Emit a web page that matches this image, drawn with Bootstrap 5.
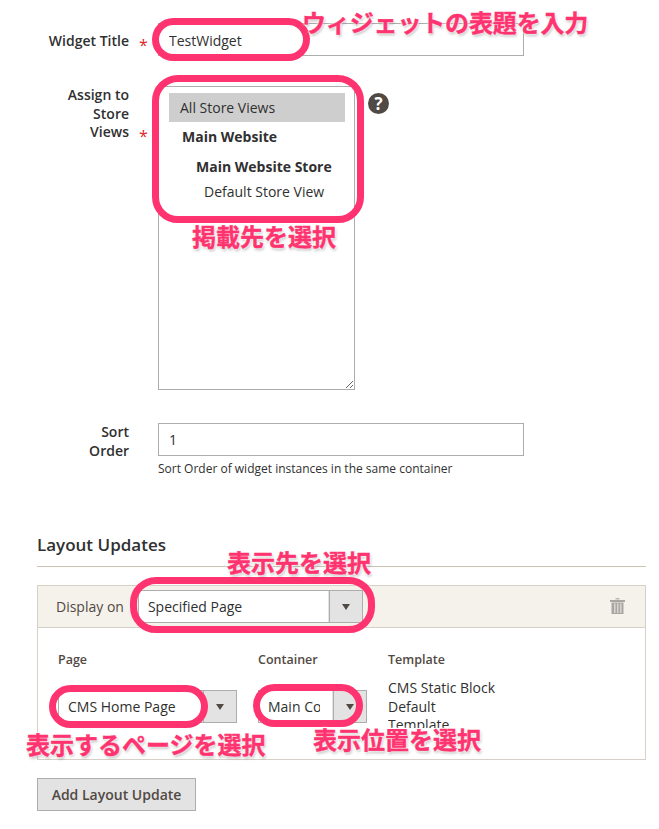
<!DOCTYPE html>
<html lang="en">
<head>
<meta charset="utf-8">
<title>Widget</title>
<link rel="stylesheet" href="https://cdn.jsdelivr.net/npm/bootstrap@5.3.0/dist/css/bootstrap.min.css">
<style>
body{font-family:"Open Sans",sans-serif;font-size:14px;color:#303030;background:#fff;position:relative;height:829px;overflow:hidden}
.sheet{padding:23px 13px 0 37px}
.frow{display:flex;align-items:flex-start}
.flabel{width:92px;flex:none;text-align:right;font-weight:600;line-height:18.6px;margin:0;color:#303030;position:relative;padding-left:30px}
.flabel-one{padding:9px 0 0}
.fstar{position:absolute;left:102px;color:#e22626;font-size:16px;font-weight:400;line-height:18px;bottom:-3px}
.fgap{width:29px;flex:none}
.fctl.form-control{width:366px;height:33px;border:1px solid #adadad;border-radius:0;padding:0 10px;font-size:14px;color:#303030;font-family:inherit;box-shadow:none}
.fctl.fctl-low.form-control{padding-top:2px}
.storebox{width:197px;height:304px;border:1px solid #adadad;resize:both;overflow:auto;padding:6px 10px 0;flex:none}
.st-all{background:#cecece;height:29px;line-height:29px;padding-left:11px;width:176px}
.st-site{font-weight:700;margin:5px 0 0 13px;line-height:19px}
.st-store{font-weight:700;margin:11px 0 0 27px;line-height:19px}
.st-view{margin:6px 0 0 35px;line-height:19px}
.helpdot{width:21px;height:21px;border-radius:50%;background:#514943;color:#fff;font-weight:700;font-size:17px;line-height:21px;text-align:center;margin:7px 0 0 13px;flex:none}
.fnote{font-size:12px;line-height:16px;margin:1px 0 0 121px;color:#303030}
.sechead{font-size:17px;font-weight:600;color:#303030;line-height:22px;margin:57px 0 0;padding-bottom:10px;border-bottom:1px solid #cac3b4}
.lpanel{margin:18px 0 0 0;border:1px solid #d6d0c7;height:175px;overflow:hidden}
.lhead{background:#f5f1eb;height:42px;border-bottom:1px solid #d6d0c7;display:flex;align-items:center;padding:0 20px 1px 18px;color:#514943}
.ltrash{margin-left:auto;display:block}
.pick{position:relative;flex:none}
.pick .form-select{appearance:none;border:1px solid #adadad;border-radius:0;height:33px;font-family:inherit;font-size:14px;color:#303030;padding:0 46px 0 9px;width:100%;background:#fff linear-gradient(#e3e3e3,#e3e3e3) right/34px 100% no-repeat;box-shadow:none}
.pick::before{content:"";position:absolute;top:0;bottom:0;right:33px;border-left:1px solid #adadad}
.pick::after{content:"";position:absolute;right:13px;top:14px;border:4px solid transparent;border-top:6px solid #514943;border-bottom:0}
.pick-top{width:225px;margin-left:14px}
.pick-page{width:179px}
.pick-box{width:109px}
.lbody{display:flex;padding:23px 0 0 20px}
.lcolpage{width:200px;flex:none}
.lcolbox{width:130px;flex:none}
.lth{font-size:12.500px;font-weight:600;color:#514943;line-height:17px}
.lpick{margin-top:22px}
.ltpl{margin-top:11px;line-height:18.6px;width:110px;height:49px;overflow:hidden;color:#303030}
.addbtn.btn{margin-top:18px;background:#e3e3e3;border:1px solid #adadad;border-radius:0;color:#514943;font-weight:600;font-size:14px;width:159px;height:33px;padding:0;font-family:inherit}
.oval{position:absolute;border:7px solid #ff336f;border-radius:22px}
.note{position:absolute;font-family:"Noto Sans CJK JP",sans-serif;font-weight:700;font-size:24px;line-height:28px;color:#ff336f;white-space:nowrap;-webkit-text-stroke:.4px #ff336f;text-shadow:0 0 3px #fff,0 0 3px #fff,1px 2px 3px rgba(0,0,0,.3)}
.note-tight{letter-spacing:-.15px}
</style>
</head>
<body>
<div class="sheet">
  <div class="frow">
    <label class="flabel flabel-one">Widget Title<span class="fstar">*</span></label>
    <div class="fgap"></div>
    <input class="form-control fctl fctl-low" value="TestWidget">
  </div>
  <div class="frow" style="margin-top:30px">
    <label class="flabel">Assign to Store Views<span class="fstar">*</span></label>
    <div class="fgap"></div>
    <div class="storebox">
      <div class="st-all">All Store Views</div>
      <div class="st-site">Main Website</div>
      <div class="st-store">Main Website Store</div>
      <div class="st-view">Default Store View</div>
    </div>
    <div class="helpdot">?</div>
  </div>
  <div class="frow" style="margin-top:33px">
    <label class="flabel">Sort Order</label>
    <div class="fgap"></div>
    <input class="form-control fctl" value="1">
  </div>
  <div class="fnote">Sort Order of widget instances in the same container</div>
  <div class="sechead">Layout Updates</div>
  <div class="lpanel">
    <div class="lhead">
      <span>Display on</span>
      <div class="pick pick-top"><select class="form-select"><option>Specified Page</option></select></div>
      <svg class="ltrash" width="15" height="16" viewBox="0 0 15 16"><rect x="5.500" y="0" width="4" height="1.500" fill="#bbb8b4"/><rect x="0" y="2" width="15" height="2" fill="#a9a6a2"/><path d="M1.500 4.500h12V16h-12z" fill="#a9a6a2"/><path d="M4 5.500h1.500v9.500H4zM7 5.500h1.500v9.500H7zM10 5.500h1.500v9.500H10z" fill="#d8d6d2"/></svg>
    </div>
    <div class="lbody">
      <div class="lcolpage">
        <div class="lth">Page</div>
        <div class="pick pick-page lpick"><select class="form-select"><option>CMS Home Page</option></select></div>
      </div>
      <div class="lcolbox">
        <div class="lth">Container</div>
        <div class="pick pick-box lpick"><select class="form-select"><option>Main Content Area</option></select></div>
      </div>
      <div>
        <div class="lth">Template</div>
        <div class="ltpl">CMS Static Block Default Template</div>
      </div>
    </div>
  </div>
  <button class="btn addbtn" type="button">Add Layout Update</button>
</div>

<div class="oval" style="left:152px;top:18px;width:158px;height:43px"></div>
<div class="oval" style="left:152px;top:75px;width:212px;height:148px;border-radius:26px"></div>
<div class="oval" style="left:130px;top:577px;width:245px;height:56px;border-radius:26px"></div>
<div class="oval" style="left:49px;top:685px;width:159px;height:43px"></div>
<div class="oval" style="left:253px;top:684px;width:110px;height:43px"></div>
<div class="note note-tight" style="left:302px;top:8px">ウィジェットの表題を入力</div>
<div class="note" style="left:192px;top:222px">掲載先を選択</div>
<div class="note" style="left:227px;top:548px">表示先を選択</div>
<div class="note" style="left:26px;top:730px">表示するページを選択</div>
<div class="note" style="left:313px;top:725px">表示位置を選択</div>
<script src="https://cdn.jsdelivr.net/npm/bootstrap@5.3.0/dist/js/bootstrap.bundle.min.js"></script>
</body>
</html>
